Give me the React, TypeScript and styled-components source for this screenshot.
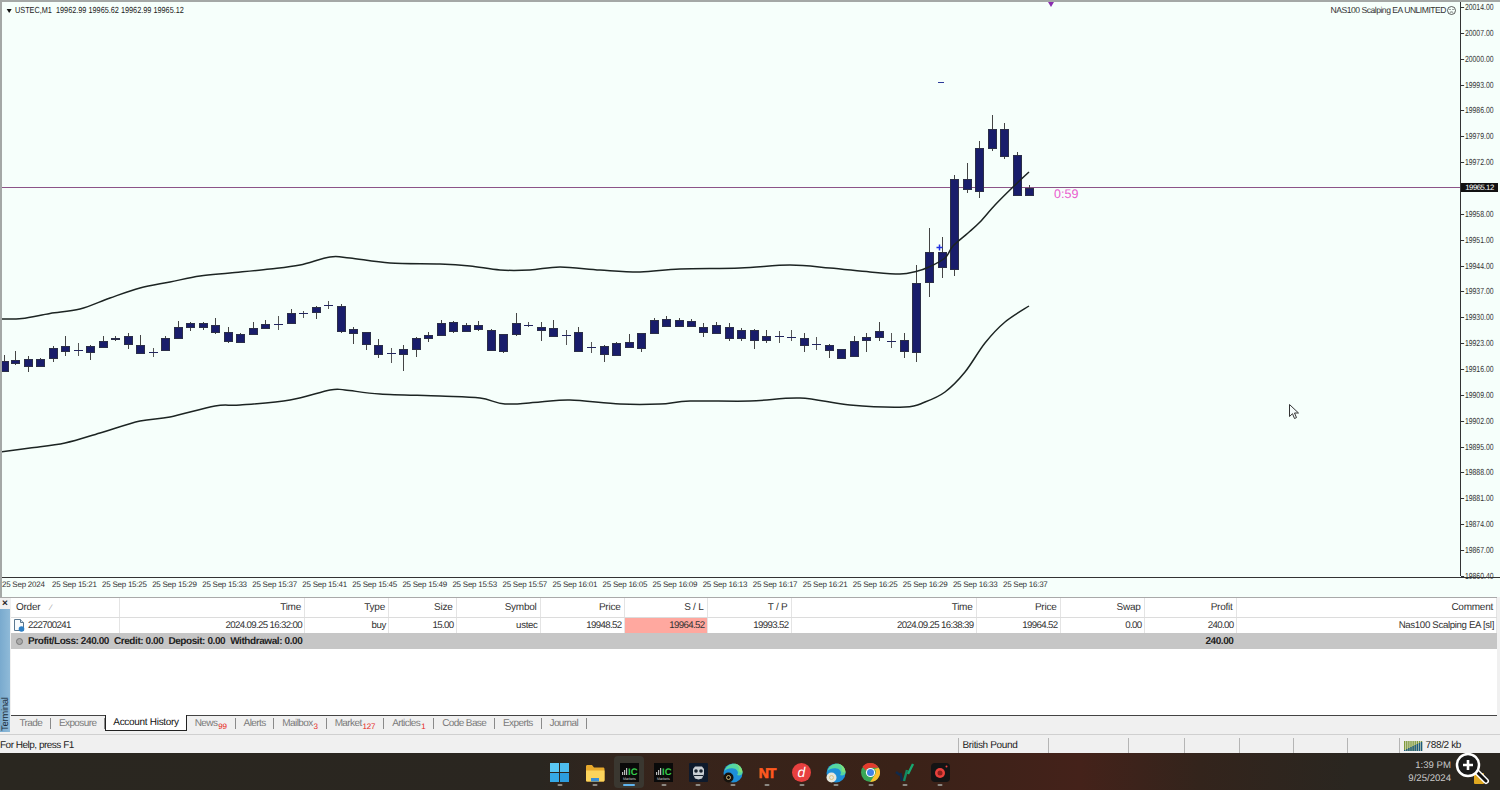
import React from 'react';
import styled, { createGlobalStyle } from 'styled-components';

const GlobalStyle = createGlobalStyle`
  html, body {
    margin: 0;
    padding: 0;
    width: 1500px;
    height: 790px;
    overflow: hidden;
    font-family: "Liberation Sans", Arial, sans-serif;
    text-rendering: geometricPrecision;
  }
`;

// x, high, low, body top, body bottom
const candles: number[][] = [
  [4, 355, 372, 361, 371], [15, 351, 365, 360, 363], [28, 356, 372, 359, 366], [40, 358, 367, 359, 366],
  [53, 346, 362, 348, 358], [65, 336, 356, 346, 351], [78, 343, 356, 350, 350], [90, 345, 360, 346, 352],
  [103, 336, 348, 341, 347], [115, 336, 341, 338, 339], [128, 333, 349, 336, 344], [140, 335, 353, 345, 353],
  [153, 348, 357, 352, 352], [165, 336, 350, 338, 350], [178, 321, 339, 327, 338], [190, 322, 331, 323, 327],
  [203, 322, 330, 323, 327], [215, 318, 334, 325, 332], [228, 327, 343, 332, 341], [240, 333, 342, 334, 342],
  [253, 322, 335, 328, 334], [265, 320, 329, 324, 328], [278, 316, 330, 324, 324], [291, 309, 324, 313, 323],
  [303, 311, 318, 313, 313], [316, 306, 319, 307, 312], [328, 301, 309, 305, 305], [341, 304, 333, 306, 331],
  [353, 327, 344, 329, 333], [366, 332, 350, 332, 344], [378, 339, 358, 345, 354], [391, 348, 363, 353, 353],
  [403, 345, 371, 349, 354], [416, 337, 357, 338, 349], [428, 332, 342, 335, 338], [441, 320, 335, 323, 335],
  [453, 321, 333, 322, 331], [466, 323, 332, 325, 331], [478, 321, 331, 325, 329], [491, 329, 350, 330, 350],
  [503, 334, 353, 334, 351], [516, 313, 336, 323, 334], [528, 322, 327, 325, 325], [541, 322, 341, 327, 330],
  [553, 320, 336, 328, 336], [566, 330, 345, 335, 335], [578, 327, 352, 332, 351], [591, 342, 353, 347, 347],
  [604, 345, 362, 346, 354], [616, 342, 355, 343, 355], [629, 334, 348, 342, 347], [641, 333, 352, 333, 348],
  [654, 318, 333, 320, 333], [666, 316, 327, 319, 326], [679, 318, 327, 320, 326], [691, 319, 327, 321, 326],
  [703, 323, 337, 327, 332], [716, 322, 334, 325, 333], [729, 323, 341, 327, 338], [741, 328, 341, 330, 338],
  [754, 329, 349, 330, 340], [766, 330, 343, 336, 340], [779, 331, 343, 336, 336], [791, 330, 341, 337, 337],
  [804, 333, 352, 338, 345], [816, 337, 350, 344, 344], [829, 344, 358, 345, 350], [841, 349, 359, 349, 358],
  [854, 336, 356, 341, 356], [866, 333, 352, 337, 340], [879, 322, 341, 331, 337], [891, 333, 348, 341, 341],
  [904, 333, 358, 340, 351], [916, 265, 362, 283, 352], [929, 228, 297, 252, 282], [942, 237, 278, 252, 267],
  [954, 175, 276, 179, 269], [967, 163, 193, 179, 189], [979, 141, 198, 148, 191], [992, 115, 151, 129, 148],
  [1004, 123, 159, 129, 156], [1017, 152, 196, 155, 195], [1029, 185, 195, 188, 195],
];

const upperBand: number[][] = [
  [0, 319], [22, 318.5], [50, 313.5], [80, 309], [110, 298], [140, 288], [170, 282], [200, 276], [230, 273], [270, 269], [300, 265],
  [330, 257], [350, 258], [390, 263], [440, 264], [470, 266], [500, 270], [530, 270], [560, 267], [600, 270], [640, 272], [680, 269],
  [740, 268], [790, 265], [830, 268], [870, 272], [900, 274], [916, 271.5], [929, 267], [945, 258], [953, 246], [968, 233], [980, 222],
  [995, 205], [1013, 187], [1029, 172],
];
const lowerBand: number[][] = [
  [0, 452], [30, 448], [65, 443], [100, 433], [140, 421], [170, 417], [215, 406], [240, 405], [290, 400], [330, 390], [345, 390], [380, 394],
  [440, 396], [480, 398], [505, 404], [540, 402], [570, 400], [620, 404], [660, 404], [690, 401], [750, 401], [800, 398], [850, 405],
  [905, 407], [925, 402], [945, 392], [965, 372], [985, 343], [1005, 322], [1029, 306],
];

// catmull-rom through the points, the bands are smooth in the terminal
function smoothPath(pts: number[][]) {
  let d = `M${pts[0][0]} ${pts[0][1]}`;
  for (let i = 0; i < pts.length - 1; i++) {
    const p0 = pts[Math.max(i - 1, 0)];
    const p1 = pts[i];
    const p2 = pts[i + 1];
    const p3 = pts[Math.min(i + 2, pts.length - 1)];
    const c1x = p1[0] + (p2[0] - p0[0]) / 6;
    const c1y = p1[1] + (p2[1] - p0[1]) / 6;
    const c2x = p2[0] - (p3[0] - p1[0]) / 6;
    const c2y = p2[1] - (p3[1] - p1[1]) / 6;
    d += `C${c1x} ${c1y} ${c2x} ${c2y} ${p2[0]} ${p2[1]}`;
  }
  return d;
}

// the 19965.00 row is hidden behind the current price tag
const prices = [
  '20014.00', '20007.00', '20000.00', '19993.00', '19986.00', '19979.00', '19972.00', '', '19958.00', '19951.00', '19944.00',
  '19937.00', '19930.00', '19923.00', '19916.00', '19909.00', '19902.00', '19895.00', '19888.00', '19881.00', '19874.00', '19867.00', '19860.40',
];

const times = [
  '25 Sep 2024', '25 Sep 15:21', '25 Sep 15:25', '25 Sep 15:29', '25 Sep 15:33', '25 Sep 15:37', '25 Sep 15:41', '25 Sep 15:45', '25 Sep 15:49', '25 Sep 15:53',
  '25 Sep 15:57', '25 Sep 16:01', '25 Sep 16:05', '25 Sep 16:09', '25 Sep 16:13', '25 Sep 16:17', '25 Sep 16:21', '25 Sep 16:25', '25 Sep 16:29', '25 Sep 16:33', '25 Sep 16:37',
];

const headers = ['Order', 'Time', 'Type', 'Size', 'Symbol', 'Price', 'S / L', 'T / P', 'Time', 'Price', 'Swap', 'Profit', 'Comment'];
const values = ['222700241', '2024.09.25 16:32:00', 'buy', '15.00', 'ustec', '19948.52', '19964.52', '19993.52', '2024.09.25 16:38:39', '19964.52', '0.00', '240.00', 'Nas100 Scalping EA [sl]'];
const textColumns = [2, 4, 12];

const tabs = [
  { label: 'Trade' }, { label: 'Exposure' }, { label: 'Account History', active: true }, { label: 'News', badge: '99' }, { label: 'Alerts' },
  { label: 'Mailbox', badge: '3' }, { label: 'Market', badge: '127' }, { label: 'Articles', badge: '1' }, { label: 'Code Base' }, { label: 'Experts' }, { label: 'Journal' },
];

const statusCells = [80, 56, 55, 54, 54, 52];

const Page = styled.div`
  width: 1500px;
  height: 790px;
  display: flex;
  flex-direction: column;
  background: #f0f0f0;
  color: #222;
  overflow: hidden;
`;

const ChartArea = styled.div`
  position: relative;
  height: 597px;
  flex: none;
  background: #f6fffb;
  border-left: 2px solid #a4a8a6;
  border-top: 2px solid #a4a8a6;
  box-sizing: border-box;
  overflow: hidden;
`;

const ChartRow = styled.div`
  display: flex;
  height: 575px;
  border-bottom: 1px solid #333;
`;

const Plot = styled.svg`
  display: block;
  flex: none;
  margin-top: -2px;
  margin-left: -2px;
`;

const PriceAxis = styled.div`
  width: 39px;
  height: 575px;
  border-left: 1px solid #333;
  display: flex;
  flex-direction: column;
  gap: 12.86px;
  margin-top: -1px;
`;

const PriceLabel = styled.div`
  flex: none;
  height: 13px;
  line-height: 13px;
  font-size: 8.8px;
  color: #333;
  padding-left: 5px;
  position: relative;
  transform: scaleX(0.78);
  transform-origin: left center;
  &::before {
    content: '';
    position: absolute;
    left: 0;
    top: 6px;
    width: 4px;
    height: 1px;
    background: #333;
  }
`;

const TimeAxis = styled.div`
  display: flex;
  padding-top: 1px;
`;

const TimeLabel = styled.div`
  width: 50.05px;
  flex: none;
  font-size: 8px;
  letter-spacing: -0.25px;
  line-height: 11px;
  color: #333;
  white-space: nowrap;
`;

const ChartTitle = styled.div`
  position: absolute;
  left: 13px;
  top: 3px;
  font-size: 8.8px;
  line-height: 11px;
  color: #222;
  white-space: pre;
  transform: scaleX(0.83);
  transform-origin: left center;
`;

const TitleArrow = styled.span`
  position: absolute;
  left: -10px;
  top: 4px;
  border-left: 3px solid transparent;
  border-right: 3px solid transparent;
  border-top: 4px solid #111;
`;

const ExpertName = styled.div`
  position: absolute;
  right: 44px;
  top: 3px;
  display: flex;
  align-items: center;
  gap: 1px;
  font-size: 8.6px;
  letter-spacing: -0.5px;
  line-height: 11px;
  color: #333;
`;

const Countdown = styled.div`
  position: absolute;
  left: 1052px;
  top: 185px;
  font-size: 12.5px;
  line-height: 14px;
  color: #ea5ccf;
`;

const PriceTag = styled.div`
  position: absolute;
  left: 1459px;
  top: 181px;
  width: 37px;
  height: 9px;
  background: #111;
  color: #fff;
  font-size: 7.8px;
  line-height: 9px;
  letter-spacing: -0.5px;
  text-align: center;
`;

const Terminal = styled.div`
  flex: 1;
  display: flex;
  min-height: 0;
  border-top: 1px solid #a9a9a9;
  margin-right: 3px;
`;

const SideBar = styled.div`
  width: 10px;
  flex: none;
  display: flex;
  flex-direction: column;
  margin-right: 1px;
  margin-bottom: 2px;
`;

const CloseBox = styled.div`
  height: 11px;
  font-size: 10px;
  line-height: 11px;
  font-weight: 700;
  text-align: center;
  color: #222;
`;

const SideTitle = styled.div`
  flex: 1;
  display: flex;
  align-items: center;
  justify-content: flex-start;
  writing-mode: vertical-rl;
  transform: rotate(180deg);
  font-size: 9.5px;
  letter-spacing: -0.3px;
  color: #1c2d3a;
  background: linear-gradient(90deg, #8fbad8, #79aace);
  padding-top: 1px;
`;

const TerminalBody = styled.div`
  flex: 1;
  min-width: 0;
  display: flex;
  flex-direction: column;
`;

const columns = '109px 185px 84px 67.5px 84px 84px 83px 84px 185px 84px 84px 92px 1fr';

const TableHead = styled.div`
  display: grid;
  grid-template-columns: ${columns};
  height: 19px;
  background: #fff;
  border-bottom: 1px solid #dcdcdc;
`;

const HeadCell = styled.div<{ $left?: boolean }>`
  font-size: 10px;
  letter-spacing: -0.25px;
  line-height: 19px;
  color: #333;
  border-right: 1px solid #e4e4e4;
  text-align: ${p => (p.$left ? 'left' : 'right')};
  padding: ${p => (p.$left ? '0 0 0 5px' : '0 3px 0 0')};
`;

const SortMark = styled.span`
  color: #999;
  font-size: 8px;
  margin-left: 10px;
`;

const TableRow = styled.div`
  display: grid;
  grid-template-columns: ${columns};
  height: 15px;
  background: #fff;
`;

const RowCell = styled.div<{ $hit?: boolean; $first?: boolean; $text?: boolean }>`
  display: flex;
  align-items: center;
  justify-content: ${p => (p.$first ? 'flex-start' : 'flex-end')};
  gap: 3px;
  font-size: 9.7px;
  letter-spacing: ${p => (p.$text ? '-0.35px' : '-0.65px')};
  color: #333;
  padding: ${p => (p.$first ? '0 0 0 2px' : '0 2px 0 0')};
  background: ${p => (p.$hit ? '#ffa89f' : 'transparent')};
  border-right: 1px solid #e4e4e4;
`;

const SumRow = styled.div`
  display: grid;
  grid-template-columns: ${columns};
  height: 16px;
  background: #c6c6c6;
  align-items: center;
  font-size: 10px;
  font-weight: 700;
  letter-spacing: -0.42px;
  color: #222;
`;

const SumText = styled.div`
  grid-column: 1 / 12;
  display: flex;
  align-items: center;
  gap: 5px;
  padding-left: 5px;
`;

const SumDot = styled.span`
  width: 5px;
  height: 5px;
  border-radius: 50%;
  border: 1px solid #777;
  background: #aaa;
`;

const SumValue = styled.div`
  grid-column: 12;
  text-align: right;
  padding-right: 3px;
`;

const Empty = styled.div`
  flex: 1;
  background: #fff;
`;

const TabBar = styled.div`
  height: 18px;
  display: flex;
  align-items: flex-start;
  border-top: 1px solid #444;
  background: #f0f0f0;
  padding-left: 0.5px;
`;

const Tab = styled.div<{ $active?: boolean }>`
  height: ${p => (p.$active ? '15px' : '11px')};
  margin-top: ${p => (p.$active ? '-1px' : '2px')};
  display: flex;
  align-items: center;
  padding: 0 ${p => (p.$active ? '7px' : '7.9px')};
  font-size: 10px;
  letter-spacing: ${p => (p.$active ? '-0.3px' : '-0.6px')};
  color: ${p => (p.$active ? '#111' : '#7a7a7a')};
  background: ${p => (p.$active ? '#fff' : 'transparent')};
  border-right: ${p => (p.$active ? '1px solid #222' : '1px solid #8a8a8a')};
  border-left: ${p => (p.$active ? '1px solid #222' : 'none')};
  border-bottom: ${p => (p.$active ? '1px solid #222' : 'none')};
  white-space: nowrap;
`;

const TabBadge = styled.span`
  color: #e6281c;
  font-size: 8px;
  letter-spacing: -0.2px;
  margin-left: 1px;
  margin-top: 5px;
`;

const StatusBar = styled.div`
  flex: none;
  height: 19px;
  display: flex;
  align-items: stretch;
  border-top: 1px solid #d0d0d0;
  box-sizing: border-box;
  padding-top: 3px;
  background: #f0f0f0;
  font-size: 10px;
  color: #222;
`;

const StatusHelp = styled.div`
  width: 958px;
  line-height: 15px;
  flex: none;
  letter-spacing: -0.5px;
`;

const StatusCell = styled.div<{ $w: number }>`
  width: ${p => p.$w}px;
  flex: none;
  box-sizing: border-box;
  border-left: 1px solid #b5b5b5;
  padding-left: 3.500px;
  line-height: 15px;
  letter-spacing: -0.35px;
  display: flex;
  align-items: center;
  gap: 3px;
`;

const Taskbar = styled.div`
  position: relative;
  flex: none;
  height: 37px;
  display: grid;
  grid-template-columns: 1fr auto 1fr;
  align-items: center;
  background: linear-gradient(90deg, #2a2720 0%, #2a2620 36%, #37241b 44%, #3a2218 60%, #44221a 72%, #33241c 80%, #2a2620 90%);
`;

const TaskIcons = styled.div`
  grid-column: 2;
  display: flex;
  height: 100%;
`;

const TaskIcon = styled.div<{ $active?: boolean }>`
  position: relative;
  width: 34.55px;
  height: 100%;
  display: flex;
  align-items: center;
  justify-content: center;
  padding-top: 2px;
  box-sizing: border-box;
  & > svg {
    position: relative;
  }
  &::before {
    content: '';
    position: absolute;
    left: 2px;
    right: 2px;
    top: 3px;
    bottom: 2px;
    border-radius: 4px;
    background: ${p => (p.$active ? '#3a3730' : 'transparent')};
  }
  &::after {
    content: '';
    position: absolute;
    left: 50%;
    bottom: 4px;
    height: 2px;
    width: ${p => (p.$active ? '12px' : '5px')};
    transform: translateX(-50%);
    border-radius: 1px;
    background: ${p => (p.$active ? '#5fb4ee' : '#8d8a84')};
  }
`;

const Tray = styled.div`
  grid-column: 3;
  justify-self: end;
  text-align: right;
  padding-right: 49px;
  font-size: 9.6px;
  line-height: 13px;
  color: #c9c9c9;
`;

const Magnifier = styled.svg`
  position: absolute;
  right: 9px;
  top: -3px;
`;

const Cursor = styled.svg`
  position: absolute;
  left: 1286px;
  top: 401px;
`;

function Candle({ c }: { c: number[] }) {
  const [x, high, low, top, bottom] = c;
  const flat = top === bottom;
  return (
    <g>
      <line x1={x + 0.5} x2={x + 0.5} y1={high} y2={low} stroke={flat ? '#555' : '#444'} />
      {flat ? (
        <line x1={x - 4} x2={x + 5} y1={top + 0.5} y2={top + 0.5} stroke="#23265f" />
      ) : (
        <rect x={x - 3.5} y={top + 0.5} width={8} height={bottom - top} fill="#191d6b" stroke="#2b2e48" />
      )}
    </g>
  );
}

function Chart() {
  return (
    <Plot width={1460} height={576} viewBox="0 0 1460 576">
      <line x1={0} x2={1460} y1={187.5} y2={187.5} stroke="#8c5488" />
      {candles.map(c => (
        <Candle key={c[0]} c={c} />
      ))}
      <path d={smoothPath(upperBand)} fill="none" stroke="#1c2422" strokeWidth={1.5} />
      <path d={smoothPath(lowerBand)} fill="none" stroke="#1c2422" strokeWidth={1.5} />
      <path d="M1048 2h6l-3 5z" fill="#8a2fb0" />
      <line x1={938} x2={944} y1={82.5} y2={82.5} stroke="#2c3a9a" />
      <path d="M939.500 244.500v6M936.500 247.500h6" stroke="#2030e0" strokeWidth={1.5} />
    </Plot>
  );
}

function Smiley() {
  return (
    <svg width="9" height="9" viewBox="0 0 9 9">
      <circle cx="4.5" cy="4.5" r="4" fill="none" stroke="#333" strokeWidth="0.8" />
      <circle cx="3" cy="3.5" r="0.6" fill="#333" />
      <circle cx="6" cy="3.5" r="0.6" fill="#333" />
      <path d="M2.8 6.6c1-.9 2.4-.9 3.4 0" fill="none" stroke="#333" strokeWidth="0.7" />
    </svg>
  );
}

function OrderIcon() {
  return (
    <svg width="12" height="13" viewBox="0 0 12 13">
      <path d="M1.5.5h6l3 3v8h-9z" fill="#f8fbfd" stroke="#5b7890" />
      <path d="M7.5.5v3h3" fill="#cfe0ec" stroke="#5b7890" />
      <circle cx="8.5" cy="10" r="2.8" fill="#2f7fc4" />
    </svg>
  );
}

function NetBars() {
  const bars = [0, 1, 2, 3, 4, 5, 6, 7, 8];
  return (
    <svg width="19" height="10" viewBox="0 0 19 10">
      {bars.map(b => (
        <g key={b}>
          <rect x={b * 2.1} y={0} width={1.4} height={10} fill="#7f9a3a" />
          <rect x={b * 2.1} y={9 - b} width={1.4} height={b + 1} fill="#1d5a80" />
        </g>
      ))}
    </svg>
  );
}

function IcLogo() {
  return (
    <svg width="19" height="19" viewBox="0 0 19 19">
      <rect width="19" height="19" fill="#0a0a0a" />
      <rect x="2" y="9" width="1.2" height="3" fill="#bbb" />
      <rect x="4" y="7" width="1.2" height="5" fill="#bbb" />
      <rect x="6" y="5" width="1.2" height="7" fill="#bbb" />
      <text x="8" y="12" fontSize="9.5" fontWeight="700" fill="#35c94a" fontFamily="Liberation Sans">IC</text>
      <text x="3" y="16.5" fontSize="3.6" fill="#ccc" fontFamily="Liberation Sans">Markets</text>
    </svg>
  );
}

function WindowsLogo() {
  return (
    <svg width="19" height="19" viewBox="0 0 19 19">
      <rect x="0" y="0" width="9" height="9" fill="#5ac8f5" />
      <rect x="10" y="0" width="9" height="9" fill="#4dbdf0" />
      <rect x="0" y="10" width="9" height="9" fill="#35a9e6" />
      <rect x="10" y="10" width="9" height="9" fill="#2c9ddf" />
    </svg>
  );
}

function FolderIcon() {
  return (
    <svg width="20" height="18" viewBox="0 0 20 18">
      <path d="M1 2.5c0-1 .6-1.5 1.5-1.5H7l2 2.500h9c1 0 1.500.6 1.500 1.500V16c0 1-.6 1.500-1.500 1.500H2.500C1.500 17.500 1 17 1 16z" fill="#e8a92c" />
      <path d="M1 6.500h18.500V16c0 1-.6 1.500-1.500 1.500H2.500C1.500 17.500 1 17 1 16z" fill="#fcd45c" />
      <rect x="6" y="14" width="8" height="3.500" fill="#3a8fd6" />
    </svg>
  );
}

function OwlIcon() {
  return (
    <svg width="19" height="19" viewBox="0 0 19 19">
      <rect width="19" height="19" rx="1" fill="#0e1a2c" />
      <path d="M4 6l2-2.500h7L15 6v5l-2 4.500-3.500 1-3.500-1L4 11z" fill="#c9ced3" />
      <circle cx="7" cy="8" r="1.800" fill="#16202c" />
      <circle cx="12" cy="8" r="1.800" fill="#16202c" />
      <path d="M5 12.500h9" stroke="#16202c" />
    </svg>
  );
}

function EdgeIcon({ badge }: { badge: string }) {
  return (
    <svg width="20" height="20" viewBox="0 0 20 20">
      <circle cx="10" cy="10" r="9.500" fill="#1d8fd8" />
      <path d="M1.500 8C3 2 9 0 13 1c4 1 6.500 5 6.500 8.500 0 2.500-3 3.500-5.500 2.500 2-1.500 1-6-3.500-6.500C6.500 5 3.500 6 1.500 8z" fill="#56d6a0" />
      <path d="M19.500 9.500C19.500 5 16 1 11 .6 15 1.500 17 5 15.500 8c1.500 1 3 1.500 4 1.500z" fill="#7fe07a" />
      <circle cx="5.500" cy="14.500" r="5" fill={badge} />
      <circle cx="5.500" cy="14.500" r="2" fill="none" stroke="#d8c27a" strokeWidth="0.9" />
    </svg>
  );
}

function ChromeIcon() {
  return (
    <svg width="19" height="19" viewBox="0 0 19 19">
      <circle cx="9.500" cy="9.500" r="9.500" fill="#3aa757" />
      <path d="M9.500 0a9.500 9.500 0 0 1 8.230 4.750H9.500a4.750 4.750 0 0 0-4.400 3L1.500 3.700A9.500 9.500 0 0 1 9.500 0z" fill="#e33b2e" />
      <path d="M17.730 4.750a9.500 9.500 0 0 1-8.500 14.240l4.400-7A4.750 4.750 0 0 0 13.600 6z" fill="#fbc02d" />
      <circle cx="9.500" cy="9.500" r="4.600" fill="#fff" />
      <circle cx="9.500" cy="9.500" r="3.500" fill="#3f83e6" />
    </svg>
  );
}

function WaveIcon() {
  return (
    <svg width="20" height="20" viewBox="0 0 20 20">
      <path d="M1 9l4 3" stroke="#0f2a4c" strokeWidth="2.400" fill="none" />
      <path d="M5.500 10l1.500 8" stroke="#0f2a4c" strokeWidth="2.400" fill="none" />
      <path d="M9 18l3-11" stroke="#128a62" strokeWidth="2.400" fill="none" />
      <path d="M13 11L18 1" stroke="#17a870" strokeWidth="2.400" fill="none" />
    </svg>
  );
}

function RecordIcon() {
  return (
    <svg width="19" height="19" viewBox="0 0 19 19">
      <rect width="19" height="19" rx="4" fill="#141414" />
      <circle cx="9" cy="10" r="5" fill="#e8413c" />
      <circle cx="9" cy="10" r="2.500" fill="#8a1f1b" />
      <circle cx="15.500" cy="3.500" r="1" fill="#e8413c" />
    </svg>
  );
}

function NtIcon() {
  return (
    <svg width="24" height="18" viewBox="0 0 24 18">
      <text x="12" y="14" textAnchor="middle" fontSize="14" fontWeight="700" fontFamily="Liberation Sans" fill="#ff5a1f" stroke="#ff5a1f" strokeWidth="0.6" letterSpacing="-1">NT</text>
    </svg>
  );
}

function DIcon() {
  return (
    <svg width="19" height="19" viewBox="0 0 19 19">
      <circle cx="9.500" cy="9.500" r="9.500" fill="#e8403f" />
      <text x="9.500" y="14" textAnchor="middle" fontSize="14" fontWeight="400" fontStyle="italic" fontFamily="Liberation Sans" fill="#fff">d</text>
    </svg>
  );
}

const taskItems: { key: string; node: React.ReactNode; active?: boolean }[] = [
  { key: 'win', node: <WindowsLogo /> },
  { key: 'folder', node: <FolderIcon /> },
  { key: 'ic1', node: <IcLogo />, active: true },
  { key: 'ic2', node: <IcLogo /> },
  { key: 'owl', node: <OwlIcon /> },
  { key: 'edge1', node: <EdgeIcon badge="#16130e" /> },
  { key: 'nt', node: <NtIcon /> },
  { key: 'd', node: <DIcon /> },
  { key: 'edge2', node: <EdgeIcon badge="#e6e6dc" /> },
  { key: 'chrome', node: <ChromeIcon /> },
  { key: 'wave', node: <WaveIcon /> },
  { key: 'rec', node: <RecordIcon /> },
];

export default function App() {
  return (
    <Page>
      <GlobalStyle />
      <ChartArea>
        <ChartRow>
          <Chart />
          <PriceAxis>
            {prices.map((p, i) => (
              <PriceLabel key={i}>{p}</PriceLabel>
            ))}
          </PriceAxis>
        </ChartRow>
        <TimeAxis>
          {times.map(t => (
            <TimeLabel key={t}>{t}</TimeLabel>
          ))}
        </TimeAxis>
        <ChartTitle>
          <TitleArrow />
          {'USTEC,M1  19962.99 19965.62 19962.99 19965.12'}
        </ChartTitle>
        <ExpertName>
          NAS100 Scalping EA UNLIMITED
          <Smiley />
        </ExpertName>
        <Countdown>0:59</Countdown>
        <PriceTag>19965.12</PriceTag>
        <Cursor width="12" height="18" viewBox="0 0 12 18">
          <path d="M1.500 1.500v12l3-2.800 2 4.800 2-.9-2-4.600h4z" fill="#f4fbfa" stroke="#333" strokeWidth="1" />
        </Cursor>
      </ChartArea>
      <Terminal>
        <SideBar>
          <CloseBox>×</CloseBox>
          <SideTitle>Terminal</SideTitle>
        </SideBar>
        <TerminalBody>
          <TableHead>
            {headers.map((h, i) => (
              <HeadCell key={i} $left={i === 0}>
                {h}
                {i === 0 && <SortMark>⁄</SortMark>}
              </HeadCell>
            ))}
          </TableHead>
          <TableRow>
            {values.map((v, i) => (
              <RowCell key={i} $first={i === 0} $hit={i === 6} $text={textColumns.includes(i)}>
                {i === 0 && <OrderIcon />}
                {v}
              </RowCell>
            ))}
          </TableRow>
          <SumRow>
            <SumText>
              <SumDot />
              <span>Profit/Loss: 240.00</span>
              <span>Credit: 0.00</span>
              <span>Deposit: 0.00</span>
              <span>Withdrawal: 0.00</span>
            </SumText>
            <SumValue>240.00</SumValue>
          </SumRow>
          <Empty />
          <TabBar>
            {tabs.map(t => (
              <Tab key={t.label} $active={t.active}>
                {t.label}
                {t.badge && <TabBadge>{t.badge}</TabBadge>}
              </Tab>
            ))}
          </TabBar>
        </TerminalBody>
      </Terminal>
      <StatusBar>
        <StatusHelp>For Help, press F1</StatusHelp>
        <StatusCell $w={90}>British Pound</StatusCell>
        {statusCells.map((w, i) => (
          <StatusCell key={i} $w={w} />
        ))}
        <StatusCell $w={101}>
          <NetBars />
          788/2 kb
        </StatusCell>
      </StatusBar>
      <Taskbar>
        <TaskIcons>
          {taskItems.map(t => (
            <TaskIcon key={t.key} $active={t.active}>
              {t.node}
            </TaskIcon>
          ))}
        </TaskIcons>
        <Tray>
          1:39 PM
          <br />
          9/25/2024
        </Tray>
        <Magnifier width="36" height="38" viewBox="0 0 36 38">
          <rect x="19" y="23" width="10" height="11" rx="1" fill="#e0a820" />
          <path d="M21 21l10 10" stroke="#fff" strokeWidth="6" strokeLinecap="round" />
          <path d="M21 21l10 10" stroke="#111" strokeWidth="3" strokeLinecap="round" />
          <circle cx="13" cy="15" r="11" fill="#1a1a1a" stroke="#fff" strokeWidth="2.500" />
          <path d="M13 10v10M8 15h10" stroke="#fff" strokeWidth="2.600" />
        </Magnifier>
      </Taskbar>
    </Page>
  );
}
